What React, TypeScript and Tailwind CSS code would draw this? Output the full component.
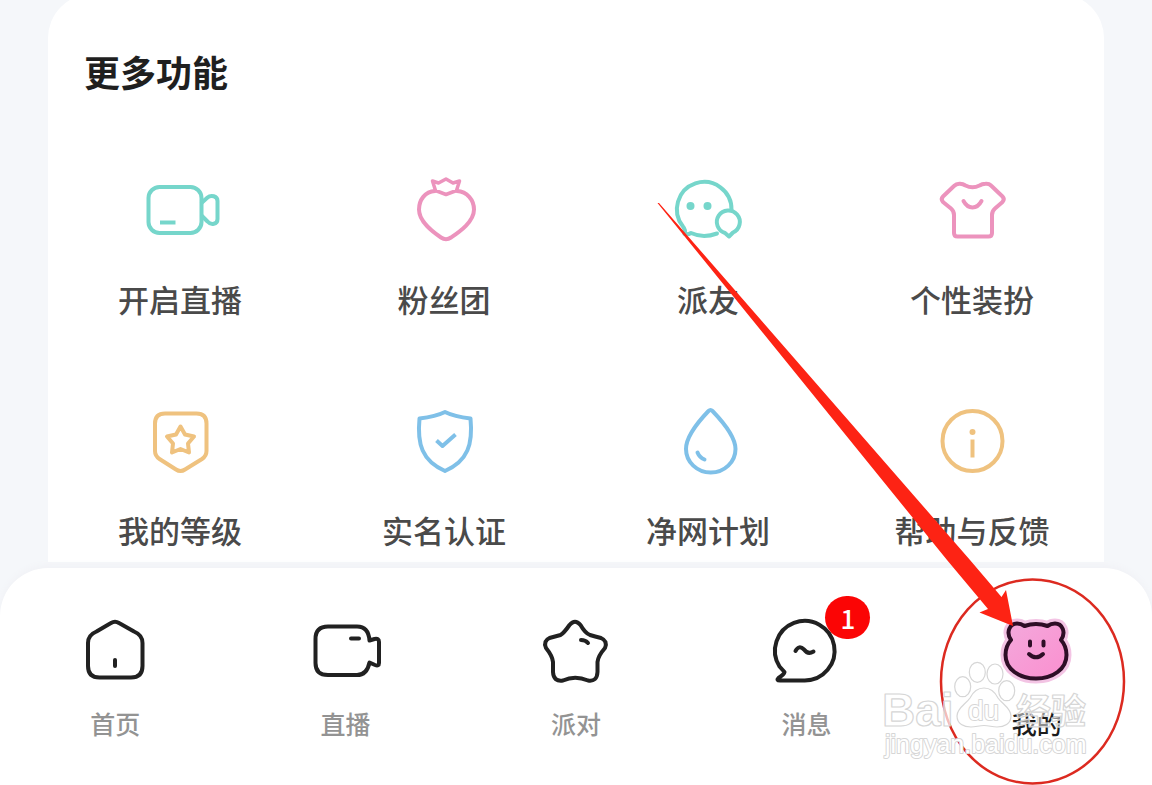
import type { ReactNode } from "react";

type Item = { label: string; color?: string; icon: ReactNode };

const features: Item[] = [
  {
    label: "开启直播",
    color: "text-[#76d6cb]",
    icon: (
      <>
        <rect x="8.5" y="17" width="53" height="46" rx="11" />
        <path d="M62 32.500 L67.500 27.500 C71 24.500 77.500 26 77.500 31 V49 C77.500 54.500 71 55.500 67.500 51.500 L62 46" />
        <path d="M20 52.500 H35.500" strokeLinecap="butt" />
      </>
    ),
  },
  {
    label: "粉丝团",
    color: "text-[#ec93bd]",
    icon: (
      <>
        <path d="M31 21 C21 21.500 15 30 15 39.500 C15 52 29 62 37 67.500 Q42 71 47 67.500 C55 62 70 52 70 39.500 C70 30 63 21.500 53 21" />
        <path d="M28.500 11 L34.500 13 L42 9 L49 13 L55.500 11 L52.500 20.500 L42 24.500 L31.500 20.500 Z" strokeWidth="3.500" />
      </>
    ),
  },
  {
    label: "派友",
    color: "text-[#76d6cb]",
    icon: (
      <>
        <path d="M63.500 40 A27.300 27.300 0 1 0 15 56.500 Q18 60 16.500 64 Q20 65 23 63 Q35 68.500 49 63.500" />
        <path d="M57 63 A11.500 11.500 0 1 1 65 62.500 L61 66.500 Z" />
        <circle cx="22.500" cy="36" r="4" fill="currentColor" stroke="none" />
        <circle cx="39.500" cy="36" r="4" fill="currentColor" stroke="none" />
      </>
    ),
  },
  {
    label: "个性装扮",
    color: "text-[#ec93bd]",
    icon: (
      <>
        <path d="M22 16 Q24.500 13.500 28 13.800 Q31 14 33.500 15.500 Q40.500 19 47.500 15.500 Q50 14 53.500 13.800 Q57 13.500 59 15.500 L70.500 26.500 Q73 29 70.500 32 L63 38.500 Q60 41 60 45 V63 Q60 66.500 56.500 66.500 H25.500 Q22 66.500 22 63 V45 Q22 41 19 38.500 L11 32 Q8.500 29 11 26.500 Z" />
        <path d="M31.500 31 Q35 37.500 40.500 37.500 Q46 37.500 49.500 31" />
      </>
    ),
  },
  {
    label: "我的等级",
    color: "text-[#efc27f]",
    icon: (
      <>
        <path d="M25 12.500 H56.500 Q66.500 12.500 66.500 22.500 V50 Q66.500 55 62 58 L45 68.500 Q40.500 71.500 36 68.500 L19.500 58 Q15 55 15 50 V22.500 Q15 12.500 25 12.500 Z" />
        <path d="M40.500 25.500 L45 33.500 L54 35.500 L48 42.500 L49 51.500 L40.500 48 L32 51.500 L33 42.500 L27 35.500 L36 33.500 Z" />
      </>
    ),
  },
  {
    label: "实名认证",
    color: "text-[#7fc0e8]",
    icon: (
      <>
        <path d="M41 11 C50 15.500 58 16.500 66.500 17.500 C69 43 64 60 41 70 C18 60 13 43 15.500 17.500 C24 16.500 32 15.500 41 11 Z" />
        <path d="M32.500 39.500 L38.500 45 L51.500 33.500" strokeLinecap="butt" />
      </>
    ),
  },
  {
    label: "净网计划",
    color: "text-[#7fc0e8]",
    icon: (
      <>
        <path d="M40.500 10 Q42.500 8 44.500 10 C56 22 67.500 36 67.500 48 A24.700 23.500 0 0 1 18 48 C18 36 29 22 40.500 10 Z" />
        <path d="M29.500 51.500 Q31.500 56.500 36.500 58.500" />
      </>
    ),
  },
  {
    label: "帮助与反馈",
    color: "text-[#efc27f]",
    icon: (
      <>
        <circle cx="40.500" cy="40" r="30" />
        <circle cx="40.500" cy="31" r="3" fill="currentColor" stroke="none" />
        <path d="M40.500 38.500 V56.500" strokeLinecap="butt" />
      </>
    ),
  },
];

const tabs: (Item & { badge?: number; active?: boolean })[] = [
  {
    label: "首页",
    icon: (
      <>
        <path d="M36 12 Q40 9.500 44 12 L59 20.500 Q67.500 24 67.500 32 V55 Q67.500 66.500 56 66.500 H24.500 Q13 66.500 13 55 V32 Q13 24 21.500 20.500 Z" />
        <path d="M40 49 V55" />
      </>
    ),
  },
  {
    label: "直播",
    icon: (
      <>
        <path d="M22 15.500 H51 Q62.500 15.500 63.500 29.500 L68.500 28 Q73 27 73 31 V52 Q73 55.500 69 54 L63.500 51.500 Q61 64 51 64 H22 Q9.500 64 9.500 52 V28 Q9.500 15.500 22 15.500 Z" />
        <path d="M45 27.500 H53" />
      </>
    ),
  },
  {
    label: "派对",
    icon: (
      <>
        <path d="M33.500 14 Q39 7.500 44.500 14 Q49 22 54 24 Q59 25.500 65 27 Q72 30 69 37 Q62 45 61.500 51 V61 Q61 71 52 69.500 Q39 64 27 69.500 Q17.500 71 17 61 V51 Q16.500 45 10 37 Q7 30 13.500 27 Q19 25.500 24.500 24 Q28 22 33.500 14 Z" />
        <path d="M45 29 Q49.500 29 52 32" />
      </>
    ),
  },
  {
    label: "消息",
    badge: 1,
    icon: (
      <>
        <path d="M38.600 69.500 A29.800 29.800 0 1 0 13.500 55.500 L18.500 61 Q18 63.500 12.500 67 Q10 69.500 14 69.500 Z" />
        <path d="M29.500 40 Q33 33.500 38 38.500 Q42 44 47.500 40.500" />
      </>
    ),
  },
  { label: "我的", active: true, icon: null },
];

function Icon({ children }: { children: ReactNode }) {
  return (
    <svg
      className="size-20"
      viewBox="0 0 80 80"
      fill="none"
      stroke="currentColor"
      strokeWidth="4"
      strokeLinecap="round"
      strokeLinejoin="round"
      aria-hidden="true"
    >
      {children}
    </svg>
  );
}

function BearIcon() {
  const head =
    "M14 29 C8.500 21 13 12.500 20 12.500 Q24 12.500 27.500 15 Q39 11 50.500 15 Q54 12.500 58 12.500 C65 12.500 69.500 21 64 29 Q69.500 35 69.500 44 C69.500 58 56 67.500 39 67.500 C22 67.500 8.500 58 8.500 44 Q8.500 35 14 29 Z";
  return (
    <svg className="size-20" viewBox="0 0 80 80" fill="none" strokeLinecap="round" strokeLinejoin="round" aria-hidden="true">
      <defs>
        <linearGradient id="bear" x1="0" y1="0" x2="1" y2="1">
          <stop offset="0" stopColor="#f3a9dc" />
          <stop offset="1" stopColor="#fb8fcf" />
        </linearGradient>
      </defs>
      <path d={head} stroke="#f3c4e4" strokeWidth="10" />
      <path d={head} fill="url(#bear)" stroke="#2e0e26" strokeWidth="4" />
      <path d="M33 30.500 V34.500 M46.500 30.500 V34.500" stroke="#2e0e26" strokeWidth="4" />
      <path d="M32 43 Q39 49.500 46 43" stroke="#2e0e26" strokeWidth="4" />
    </svg>
  );
}

function Watermark() {
  return (
    <svg
      className="pointer-events-none absolute right-14 top-[650px] h-[115px] w-[220px]"
      viewBox="0 0 220 115"
      fill="#ffffff"
      fillOpacity="0.7"
      stroke="#d6d6d6"
      strokeWidth="1.200"
      strokeLinejoin="round"
      fontFamily="'Liberation Sans', 'Noto Sans CJK SC', sans-serif"
    >
      <text x="6" y="76" fontSize="46" fontWeight="700">Bai</text>
      <ellipse cx="86.700" cy="36.700" rx="8" ry="10" />
      <ellipse cx="101.300" cy="22.300" rx="8" ry="10" />
      <ellipse cx="119" cy="24" rx="8" ry="10" />
      <ellipse cx="130.700" cy="40.700" rx="8" ry="10" />
      <path d="M108 38 C114 38 119 42 122 48 C126 54 135 58 135 66 C135 74 128 77 121 77 C116 77 113 75.500 108 75.500 C103 75.500 100 77 95 77 C88 77 81 74 81 66 C81 58 90 54 94 48 C97 42 102 38 108 38 Z" />
      <text x="92" y="70" fontSize="28" strokeWidth="2" paintOrder="stroke" fillOpacity="1">du</text>
      <text x="140" y="74" fontSize="35" fontWeight="700" fillOpacity="0.5">经验</text>
      <text x="9" y="103" fontSize="25" strokeWidth="2" paintOrder="stroke" fillOpacity="1">jingyan.baidu.com</text>
    </svg>
  );
}

function Annotation() {
  return (
    <svg
      className="pointer-events-none absolute right-0 top-[200px] h-[585px] w-[500px]"
      viewBox="652 200 500 585"
      aria-hidden="true"
    >
      <ellipse cx="1032.500" cy="681.500" rx="91.500" ry="102" fill="none" stroke="#dc2a20" strokeWidth="2.500" />
      <path d="M657.500 203 L659 203 L970 560 L1001.500 597 L1006 590 L1013 626 L979.500 612.500 L988 609 L947 560 Z" fill="#fd2314" />
    </svg>
  );
}

export default function App() {
  return (
    <div className="relative flex min-h-screen flex-col overflow-hidden bg-[#f5f7fa] font-['Noto_Sans_CJK_SC',sans-serif]">
      <main className="mx-12 -mt-1.5 rounded-t-[44px] bg-white pt-[57px] pb-3">
        <h1 className="px-9 text-[36px] leading-10 font-bold text-[#1f1f1f]">更多功能</h1>
        <div className="mt-[79px] grid grid-cols-4 gap-y-[82px]">
          {features.map((f) => (
            <button key={f.label} type="button" className="flex flex-col items-center gap-[29px]">
              <span className={f.color}>
                <Icon>{f.icon}</Icon>
              </span>
              <span className="text-[31px] leading-10 font-medium whitespace-nowrap text-[#4a4a4a]">{f.label}</span>
            </button>
          ))}
        </div>
      </main>

      <nav className="mt-1.5 grid grow grid-cols-5 items-start rounded-t-[48px] bg-white pt-[43px] pb-8 shadow-[0_-3px_6px_#f1f2f6]">
        {tabs.map((t) => (
          <a key={t.label} href="#" className="flex flex-col items-center gap-4">
            <span className="relative text-[#212121]">
              {t.active ? <BearIcon /> : <Icon>{t.icon}</Icon>}
              {t.badge && (
                <span className="absolute -top-[15px] left-[59px] flex h-[43px] w-[45px] items-center justify-center rounded-full bg-[#fb0505] text-[26px] leading-8 font-medium text-white">
                  {t.badge}
                </span>
              )}
            </span>
            <span className={`text-[25px] leading-8 font-medium ${t.active ? "text-[#1c1c1c]" : "text-[#939393]"}`}>
              {t.label}
            </span>
          </a>
        ))}
      </nav>

      <Annotation />
      <Watermark />
    </div>
  );
}
